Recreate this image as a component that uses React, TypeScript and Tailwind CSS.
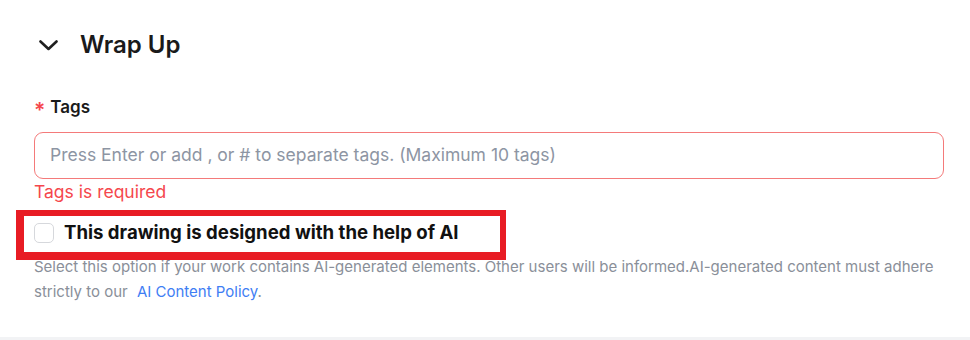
import React from 'react';

function Chevron() {
    return (
        <svg width="19" height="11" viewBox="0 0 19 11" fill="none" className="shrink-0">
            <path d="M1.5 1.5 9.5 9 17.5 1.5" stroke="#1f1f1f" strokeWidth="2.6" strokeLinecap="round" strokeLinejoin="round" />
        </svg>
    );
}

export default function App() {
    return (
        <div className="w-[970px] h-[340px] flex flex-col bg-white font-['Inter',sans-serif] overflow-hidden">
            <div className="flex-1 pl-[34px] pr-[26px] pt-[29px]">
                {/* section header */}
                <div className="flex items-center h-[32px] pl-[5px] gap-[22px]">
                    <Chevron />
                    <h2 className="text-[24px] leading-[32px] font-semibold text-[#1a1a1a]">Wrap Up</h2>
                </div>

                <label className="mt-[35px] flex items-center h-[24px] text-[17px] font-semibold text-[#1a1a1a]">
                    <span className="text-[#f5474d] text-[21px] leading-[24px] mr-[5px] mt-[6px]">*</span>
                    Tags
                </label>

                <div className="mt-[12px] h-[47px] rounded-[9px] border border-[#f47a7a] flex items-center px-[15px]">
                    <span className="text-[17.5px] text-[#8d95a3]">Press Enter or add , or # to separate tags. (Maximum 10 tags)</span>
                </div>

                <p className="mt-[1px] h-[24px] leading-[24px] text-[17.5px] text-[#f5474d]">Tags is required</p>

                {/* AI checkbox row */}
                <div className="relative mt-[17px] h-[24px] flex items-center gap-[10px]">
                    <span className="w-[20px] h-[20px] rounded-[5px] border border-[#d6d8dc] bg-white shrink-0" />
                    <span className="text-[18.6px] font-bold text-[#111]">This drawing is designed with the help of AI</span>
                    <span className="absolute left-[-18px] top-[-11px] w-[490px] h-[50px] border-t-[6px] border-r-[6px] border-b-[8px] border-l-[8px] border-[#e81c24] pointer-events-none" />
                </div>

                <p className="mt-[9px] text-[15px] leading-[25px] text-[#8a8f99]">
                    Select this option if your work contains AI-generated elements. Other users will be informed.AI-generated content must adhere strictly to our{' '}
                    <a className="ml-[5px] text-[#3f7ef4]">AI Content Policy</a>.
                </p>
            </div>
            <div className="h-[3px] bg-[#f2f3f5]" />
        </div>
    );
}
